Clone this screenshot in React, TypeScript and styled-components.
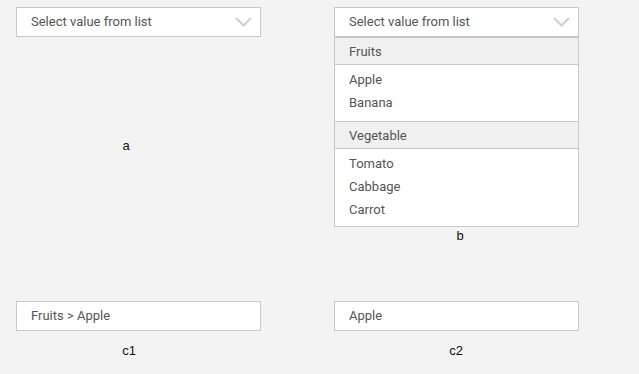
import React from 'react';
import styled, { createGlobalStyle } from 'styled-components';

interface IGroup {
    title: string;
    items: string[];
}

const groups: IGroup[] = [
    { title: 'Fruits', items: ['Apple', 'Banana'] },
    { title: 'Vegetable', items: ['Tomato', 'Cabbage', 'Carrot'] },
];

const Chevron = () => (
    <svg width="17" height="10" viewBox="0 0 17 10">
        <polyline points="1,1 8.5,8.5 16,1" fill="none" stroke="#cfcfcf" strokeWidth="2" />
    </svg>
);

const App: React.FC = () => {
    return (
        <>
            <GlobalStyle />
            <Page>
                <Row>
                    <Cell>
                        <Field>
                            <FieldText>Select value from list</FieldText>
                            <Chevron />
                        </Field>
                        <Caption $width={220} $top={101}>a</Caption>
                    </Cell>
                    <Cell>
                        <Field>
                            <FieldText>Select value from list</FieldText>
                            <Chevron />
                        </Field>
                        <Menu>
                            {groups.map((group, i) => (
                                <React.Fragment key={group.title}>
                                    <GroupTitle>{group.title}</GroupTitle>
                                    <GroupList $last={i === groups.length - 1}>
                                        {group.items.map(item => (
                                            <Option key={item}>{item}</Option>
                                        ))}
                                    </GroupList>
                                </React.Fragment>
                            ))}
                        </Menu>
                        <Caption $width={252} $top={1}>b</Caption>
                    </Cell>
                </Row>
                <Row $top={58}>
                    <Cell>
                        <Field>
                            <FieldText>Fruits &gt; Apple</FieldText>
                        </Field>
                        <Caption $width={226} $top={12}>c1</Caption>
                    </Cell>
                    <Cell>
                        <Field>
                            <FieldText>Apple</FieldText>
                        </Field>
                        <Caption $width={244} $top={12}>c2</Caption>
                    </Cell>
                </Row>
            </Page>
        </>
    );
};

const GlobalStyle = createGlobalStyle`
    html, body {
        margin: 0;
        background: #f3f3f3;
    }
    * {
        box-sizing: border-box;
    }
`

const Page = styled.div({
    width: '639px',
    minHeight: '374px',
    paddingTop: '7px',
    display: 'flex',
    flexDirection: 'column',
})

const Row = styled.div<{ $top?: number }>`
    display: grid;
    grid-template-columns: 318px 318px;
    align-items: start;
    margin-top: ${props => props.$top || 0}px;
`

const Cell = styled.div({
    paddingLeft: '16px',
    display: 'flex',
    flexDirection: 'column',
})

const Field = styled.div`
    width: 245px;
    height: 30px;
    background: #fff;
    border: 1px solid #c8c8c8;
    display: flex;
    align-items: center;
    justify-content: space-between;
    padding: 0 8px 0 14px;
    font-family: Roboto, "Liberation Sans", sans-serif;
    font-size: 13px;
    color: #555;
`

const FieldText = styled.span({
    lineHeight: '16px',
})

const Menu = styled.div`
    width: 245px;
    background: #fff;
    border: 1px solid #c8c8c8;
    border-top: none;
    font-family: Roboto, "Liberation Sans", sans-serif;
    font-size: 13px;
    color: #555;
`

const GroupTitle = styled.div`
    height: 28px;
    background: #f0f0f0;
    border-top: 1px solid #c8c8c8;
    border-bottom: 1px solid #c8c8c8;
    padding-left: 14px;
    display: flex;
    align-items: center;
`

const GroupList = styled.div<{ $last?: boolean }>`
    padding: 3px 0 ${props => (props.$last ? '5px' : '7px')} 0;
`

const Option = styled.div({
    height: '23px',
    lineHeight: '23px',
    paddingLeft: '14px',
})

const Caption = styled.div<{ $width: number; $top: number }>`
    width: ${props => props.$width}px;
    margin-top: ${props => props.$top}px;
    text-align: center;
    font-family: "Liberation Sans", Arial, sans-serif;
    font-size: 13px;
    line-height: 15px;
    color: #111;
`

export default App;
